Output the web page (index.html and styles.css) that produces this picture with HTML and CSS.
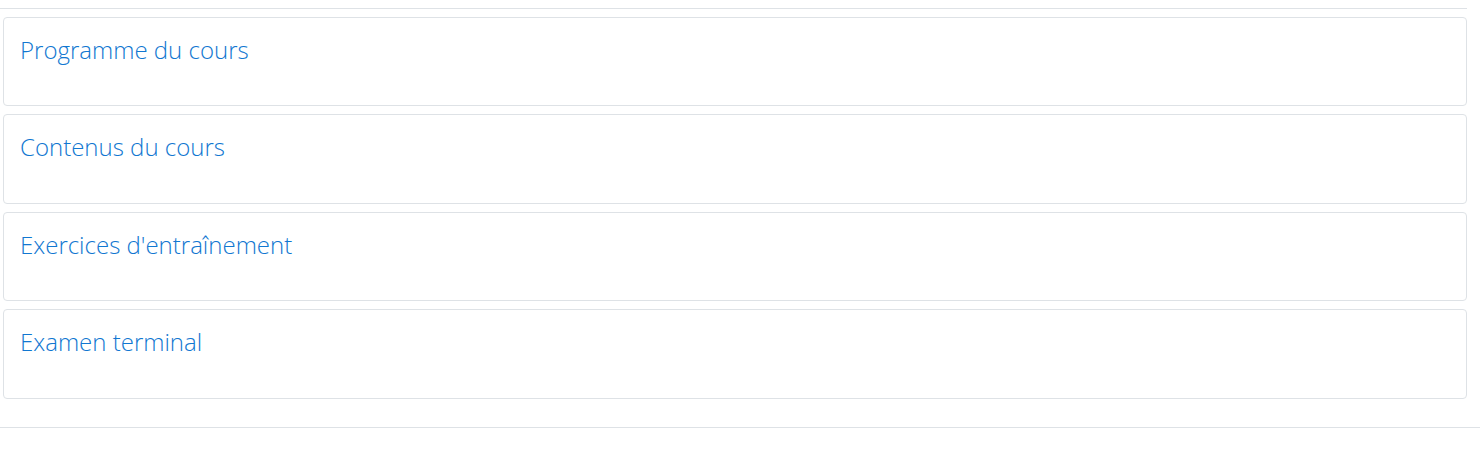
FILE: index.html
```html
<!DOCTYPE html>
<html lang="fr">
<head>
    <meta charset="UTF-8">
    <meta name="viewport" content="width=device-width, initial-scale=1.0">
    <title>Sections du cours</title>
    <link rel="stylesheet" href="styles.css">
</head>
<body>
    <hr class="rule rule-top">
    <ul class="sections">
        <li class="section">
            <h3 class="section-name"><a href="#">Programme du cours</a></h3>
        </li>
        <li class="section">
            <h3 class="section-name"><a href="#">Contenus du cours</a></h3>
        </li>
        <li class="section">
            <h3 class="section-name"><a href="#">Exercices d'entraînement</a></h3>
        </li>
        <li class="section">
            <h3 class="section-name"><a href="#">Examen terminal</a></h3>
        </li>
    </ul>
    <hr class="rule rule-bottom">
</body>
</html>
```

FILE: styles.css
```css
body {
    margin: 0;
    font-family: "Open Sans", "Liberation Sans", sans-serif;
    background: #fff;
}
.rule {
    border: 0;
    border-top: 1px solid #dee2e6;
    height: 0;
}
.rule-top {
    margin: 8px 13px 0 0;
}
.rule-bottom {
    margin: 28px 0 0 0;
}
.sections {
    list-style: none;
    margin: 8px 13px 0 3px;
    padding: 0;
    display: flex;
    flex-direction: column;
    gap: 8px;
}
.section {
    border: 1px solid #dee2e6;
    border-radius: 4px;
    height: 89.4px;
    box-sizing: border-box;
    padding: 18px 16px 0 16px;
}
.section-name {
    margin: 0;
    font-size: 24px;
    font-weight: 300;
    line-height: 1.2;
}
.section-name a {
    color: #1177d1;
    text-decoration: none;
}
```
